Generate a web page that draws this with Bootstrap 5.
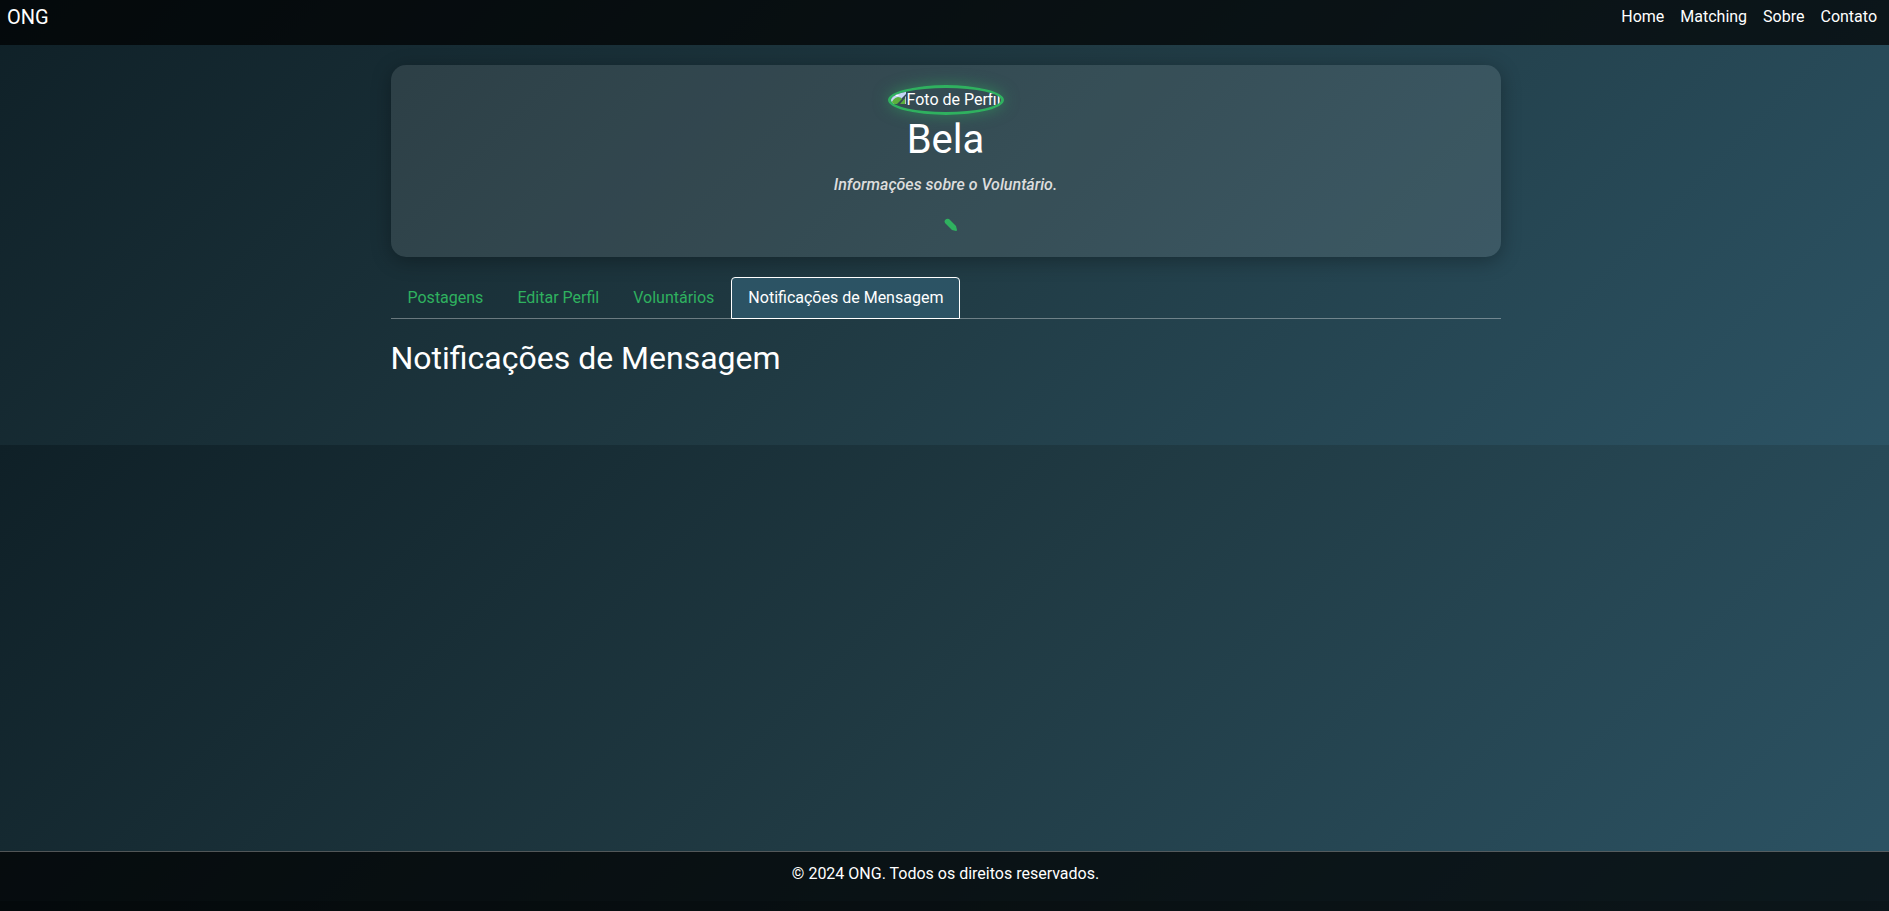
<!DOCTYPE html>
<html lang="pt-BR">
<head>
<meta charset="UTF-8">
<meta name="viewport" content="width=device-width, initial-scale=1">
<title>ONG</title>
<link rel="stylesheet" href="https://cdn.jsdelivr.net/npm/bootstrap@5.3.0/dist/css/bootstrap.min.css">
<style>
:root{--accent:#2fb15f}
html{background:linear-gradient(135deg,#0f2027,#203a43,#2c5364) 0 -11px/100% 456px}
body{font-family:Roboto,"Liberation Sans",sans-serif;color:#fff;background:none;line-height:24px}
.topbar{background:rgba(0,0,0,.7);padding:0 12px 11px 7px}
.brand{font-size:20px;line-height:34px;color:#fff}
.topbar .nav-link{color:#fff;padding:5px 0}
.page-body,.site-footer{padding-left:2px}
.profile-wrap{max-width:1110px}
.profile-card{background:rgba(255,255,255,.1);border-radius:15px;padding:20px;margin:20px 0;box-shadow:0 4px 20px rgba(0,0,0,.3)}
.avatar{border:3px solid var(--accent);border-radius:50%;overflow:hidden;box-shadow:0 0 15px rgba(47,177,95,.5);width:116px;height:30px;white-space:nowrap}
.avatar svg{flex:none;margin-top:3px}
.profile-card h1{font-size:40px;line-height:50px;font-weight:400}
.bio{color:#ddd;font-style:italic;font-weight:500;margin-bottom:15px}
.edit-btn{color:var(--accent);line-height:24px;margin-left:10px}
.nav-tabs{border-color:rgba(255,255,255,.35);margin-bottom:20px}
.nav-tabs .nav-link{color:var(--accent);border-radius:4px 4px 0 0}
.nav-tabs .nav-link.active{background:#2c5364;color:#fff;border-color:#fff}
h2{font-size:32px;line-height:38px;font-weight:400}
.site-footer{background:rgba(0,0,0,.7);border-top:1px solid rgba(255,255,255,.3);padding-top:10px;padding-bottom:25px}
</style>
</head>
<body class="d-flex flex-column min-vh-100">
<header class="topbar d-flex justify-content-between align-items-start">
  <a class="brand text-decoration-none" href="#">ONG</a>
  <nav class="nav gap-3">
    <a class="nav-link" href="#">Home</a>
    <a class="nav-link" href="#">Matching</a>
    <a class="nav-link" href="#">Sobre</a>
    <a class="nav-link" href="#">Contato</a>
  </nav>
</header>
<div class="page-body">
<main class="profile-wrap container px-0">
  <section class="profile-card text-center">
    <div class="avatar d-flex mx-auto">
      <svg width="16" height="16" viewBox="0 0 16 16" aria-hidden="true">
        <path d="M0 0h15v3L5 13H0z" fill="#c6d6f5"/>
        <path d="M4 5q2-3 4 0z" fill="#fff"/>
        <path d="M0 13Q2 7 7 6q3 0 4 2L6 13z" fill="#5bb03c"/>
        <path d="M15 6v7H9z" fill="#5bb03c"/>
        <path d="M15 5v8h-1V6z" fill="#b8bfc4"/>
      </svg>
      <span>Foto de Perfil</span>
    </div>
    <h1>Bela</h1>
    <p class="bio">Informações sobre o Voluntário.</p>
    <button class="edit-btn btn p-0 border-0" type="button" aria-label="Editar"><svg width="16" height="16" viewBox="0 0 16 16" aria-hidden="true"><path d="M2 2Q4 0 6 1L13 8L14 12Q14 13 13 13L9 12L2 5Q1 3 2 2z" fill="currentColor"/></svg></button>
  </section>
  <ul class="nav nav-tabs">
    <li class="nav-item"><a class="nav-link" href="#">Postagens</a></li>
    <li class="nav-item"><a class="nav-link" href="#">Editar Perfil</a></li>
    <li class="nav-item"><a class="nav-link" href="#">Voluntários</a></li>
    <li class="nav-item"><a class="nav-link active" aria-current="page" href="#">Notificações de Mensagem</a></li>
  </ul>
  <h2>Notificações de Mensagem</h2>
</main>
</div>
<footer class="site-footer mt-auto text-center">© 2024 ONG. Todos os direitos reservados.</footer>
<script src="https://cdn.jsdelivr.net/npm/bootstrap@5.3.0/dist/js/bootstrap.bundle.min.js"></script>
</body>
</html>
